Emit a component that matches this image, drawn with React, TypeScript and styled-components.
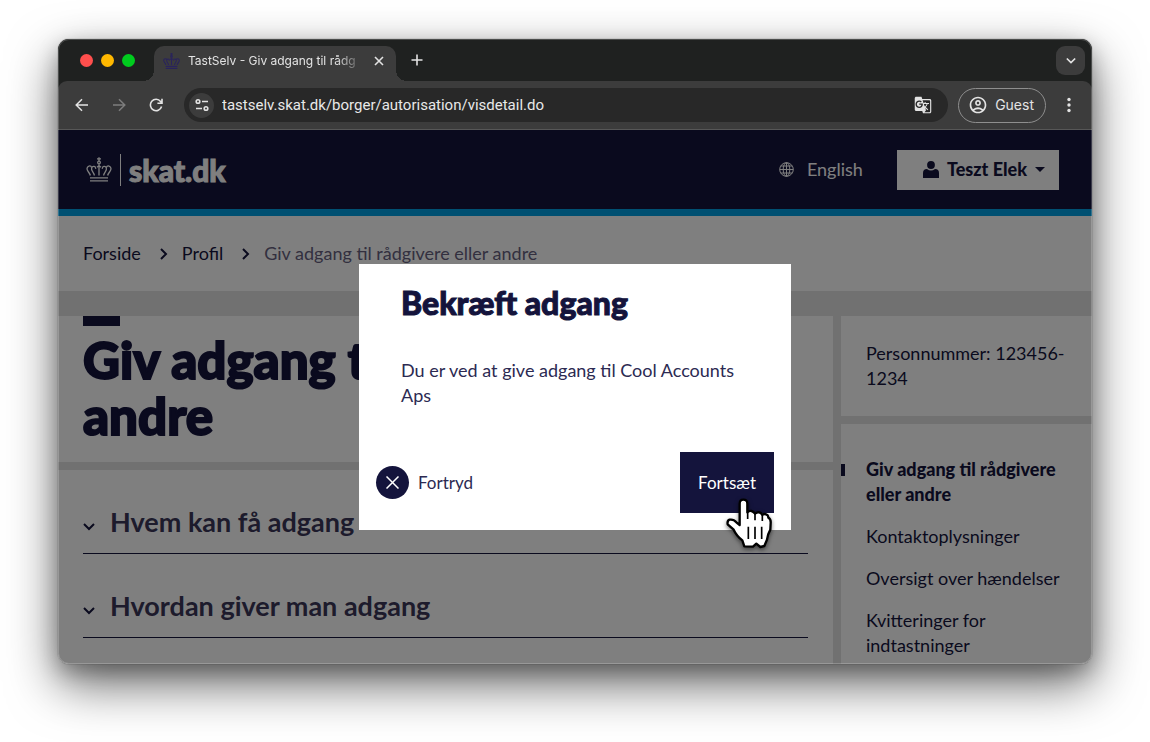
import React from "react";
import styled, { createGlobalStyle } from "styled-components";
import { MdGTranslate, MdOutlineAccountCircle } from "react-icons/md";

const navy = "#14143c";
const siteFont = `Lato, "Open Sans", sans-serif`;
const chromeFont = `Inter, Roboto, sans-serif`;

const Global = createGlobalStyle`
  *, *::before, *::after { box-sizing: border-box; }
  body { margin: 0; background: #fff; font-family: ${siteFont}; }
  h1, h2, p, ol, ul { margin: 0; padding: 0; }
  ol, ul { list-style: none; }
  a { color: inherit; text-decoration: none; }
  button { font: inherit; color: inherit; border: 0; background: none; padding: 0; cursor: pointer; }
  svg { display: block; flex: none; }
`;

const Desktop = styled.div`
  display: flex;
  min-height: 100vh;
  padding: 39px 58px 78px;
  overflow: hidden;
`;

const Window = styled.div`
  position: relative;
  flex: 1;
  min-width: 0;
  display: flex;
  flex-direction: column;
  border-radius: 11px;
  background: #1f2120;
  box-shadow: 0 0 1px rgba(0, 0, 0, 0.8), 0 20px 50px rgba(0, 0, 0, 0.6), 0 8px 20px rgba(0, 0, 0, 0.25);
  &::after {
    content: "";
    position: absolute;
    inset: 0;
    border: 1px solid rgba(255, 255, 255, 0.2);
    border-radius: 11px;
    pointer-events: none;
  }
`;

/* Browser chrome */

const TabStrip = styled.div`
  display: flex;
  align-items: flex-end;
  height: 42px;
  padding: 0 7px 0 22px;
  color: #e3e3e3;
  font-family: ${chromeFont};
`;

const Lights = styled.div`
  display: flex;
  gap: 8px;
  padding-bottom: 14px;
  margin-right: 19px;
`;

const Light = styled.span<{ $color: string }>`
  width: 13px;
  height: 13px;
  border-radius: 50%;
  background: ${(p) => p.$color};
`;

const Tab = styled.div`
  position: relative;
  display: flex;
  align-items: center;
  width: 242px;
  height: 35px;
  padding: 0 8px 6px 9px;
  border-radius: 10px 10px 0 0;
  background: #3c3c3c;
  &::before,
  &::after {
    content: "";
    position: absolute;
    bottom: 0;
    width: 11px;
    height: 11px;
  }
  &::before {
    right: 100%;
    background: radial-gradient(circle at 0 0, transparent 11px, #3c3c3c 11px);
  }
  &::after {
    left: 100%;
    background: radial-gradient(circle at 100% 0, transparent 11px, #3c3c3c 11px);
  }
`;

const Favicon = styled.span`
  color: #29235c;
`;

const TabTitle = styled.span`
  flex: 1;
  margin: 0 6px 0 8px;
  overflow: hidden;
  white-space: nowrap;
  font-size: 12px;
  line-height: 18px;
  mask-image: linear-gradient(to right, #000 84%, transparent);
`;

const ChromeButton = styled.button<{ $filled?: boolean; $dim?: boolean }>`
  display: grid;
  place-items: center;
  width: ${(p) => (p.$filled ? 29 : 18)}px;
  height: ${(p) => (p.$filled ? 29 : 18)}px;
  border-radius: 9px;
  background: ${(p) => (p.$filled ? "#3c3c3c" : "transparent")};
  color: ${(p) => (p.$dim ? "#7d7d7d" : "#e3e3e3")};
`;

const NewTab = styled.div`
  flex: 1;
  padding: 0 0 12px 12px;
`;

const TabSearch = styled.div`
  padding-bottom: 6px;
`;

const Toolbar = styled.div`
  display: flex;
  align-items: center;
  height: 49px;
  padding: 0 14px 0 15px;
  border-bottom: 1px solid #575757;
  border-radius: 9px 9px 0 0;
  background: #3c3c3c;
  color: #e3e3e3;
  font-family: ${chromeFont};
`;

const NavButtons = styled.div`
  display: flex;
  gap: 19px;
  margin-right: 19px;
`;

const AddressBar = styled.div`
  flex: 1;
  min-width: 0;
  display: flex;
  align-items: center;
  gap: 8px;
  height: 34px;
  padding: 0 16px 0 5px;
  border-radius: 17px;
  background: #282828;
`;

const SiteInfo = styled.button`
  display: grid;
  place-items: center;
  width: 25px;
  height: 25px;
  border-radius: 50%;
  background: #3c3c3c;
`;

const Address = styled.input`
  flex: 1;
  min-width: 0;
  padding: 0;
  border: 0;
  outline: 0;
  background: none;
  color: #e8e8e8;
  font-family: Roboto, Inter, sans-serif;
  font-size: 15px;
  line-height: 20px;
`;

const Guest = styled.button`
  display: flex;
  align-items: center;
  gap: 7px;
  height: 35px;
  margin: 0 14px 0 10px;
  padding: 0 11px 0 9px;
  border: 1px solid #8e8e8e;
  border-radius: 18px;
  font-size: 14px;
  line-height: 20px;
`;

/* Site */

const Page = styled.div`
  position: relative;
  flex: 1;
  display: flex;
  flex-direction: column;
  border-radius: 0 0 10px 10px;
  overflow: hidden;
  background: #e3e3e3;
  color: ${navy};
  font-size: 18px;
  line-height: 25px;
`;

const Header = styled.header`
  display: flex;
  align-items: center;
  height: 86px;
  padding: 0 33px 0 28px;
  border-bottom: 7px solid #00a0e4;
  background: ${navy};
  color: #fff;
`;

const Logo = styled.a`
  display: flex;
  align-items: center;
  gap: 8px;
  margin-right: auto;
  font-size: 30px;
  font-weight: 900;
  line-height: 32px;
  -webkit-text-stroke: 1px currentColor;
`;

const LogoRule = styled.span`
  width: 1px;
  height: 32px;
  background: #fff;
`;

const Language = styled.a`
  display: flex;
  align-items: center;
  gap: 13px;
  margin-right: 34px;
`;

const UserMenu = styled.button`
  display: flex;
  align-items: center;
  gap: 8px;
  height: 40px;
  padding: 0 14px 0 26px;
  background: #fff;
  color: ${navy};
  font-weight: 900;
`;

const Crumbs = styled.nav`
  padding: 25px;
  background: #fff;
  ol {
    display: flex;
    align-items: center;
  }
`;

const Crumb = styled.li<{ $current?: boolean }>`
  display: flex;
  align-items: center;
  color: ${(p) => (p.$current ? "#66617f" : navy)};
  svg {
    margin: 0 12px 0 17px;
  }
`;

const Columns = styled.div`
  flex: 1;
  display: grid;
  grid-template-columns: minmax(0, 1fr) 251px;
  gap: 8px;
  margin-top: 25px;
`;

const Column = styled.div`
  display: flex;
  flex-direction: column;
  gap: 8px;
`;

const Card = styled.section<{ $grow?: boolean }>`
  flex: ${(p) => (p.$grow ? "1 0 auto" : "none")};
  padding: 0 25px;
  background: #fff;
`;

const Title = styled.h1`
  padding-bottom: 18px;
  font-size: 51px;
  font-weight: 900;
  line-height: 56px;
  -webkit-text-stroke: 2px currentColor;
  &::before {
    content: "";
    display: block;
    width: 37px;
    height: 10px;
    margin-bottom: 6px;
    background: ${navy};
  }
`;

const Fold = styled.h2`
  height: 84px;
  border-bottom: 1px solid ${navy};
  button {
    display: flex;
    align-items: center;
    gap: 15px;
    width: 100%;
    height: 100%;
    padding-top: 21px;
    color: #3a3658;
    font-size: 27px;
    font-weight: 700;
    line-height: 32px;
    text-align: left;
  }
  svg {
    color: ${navy};
    margin-top: 8px;
  }
`;

const PersonNumber = styled.p`
  padding: 25px 0;
`;

const SideNav = styled.ul`
  display: flex;
  flex-direction: column;
  gap: 17px;
  padding: 33px 0 6px;
`;

const SideItem = styled.li<{ $active?: boolean }>`
  position: relative;
  font-weight: ${(p) => (p.$active ? 900 : 400)};
  &::before {
    content: "";
    display: ${(p) => (p.$active ? "block" : "none")};
    position: absolute;
    top: 7px;
    left: -25px;
    width: 4px;
    height: 12px;
    background: ${navy};
  }
`;

/* Dialog */

const Backdrop = styled.div`
  position: absolute;
  inset: 0;
  display: grid;
  place-items: center;
  background: rgba(0, 0, 0, 0.5);
`;

const Dialog = styled.div`
  width: 432px;
  padding: 22px 17px 17px;
  background: #fff;
`;

const DialogTitle = styled.h2`
  margin: 0 25px 38px;
  font-size: 32px;
  font-weight: 900;
  line-height: 34px;
  -webkit-text-stroke: 1px currentColor;
`;

const DialogText = styled.p`
  margin: 0 25px 44px;
  color: #2c2a52;
`;

const Actions = styled.div`
  display: flex;
  align-items: center;
  justify-content: space-between;
  font-size: 17px;
`;

const Cancel = styled.button`
  display: flex;
  align-items: center;
  gap: 9px;
  color: #2c2a52;
`;

const CancelMark = styled.span`
  display: grid;
  place-items: center;
  width: 33px;
  height: 33px;
  border-radius: 50%;
  background: ${navy};
  color: #fff;
`;

const Confirm = styled.button`
  position: relative;
  height: 61px;
  padding: 0 18px;
  background: ${navy};
  color: #fff;
`;

const Pointer = styled.svg`
  position: absolute;
  top: 45px;
  left: 45px;
  overflow: visible;
  filter: drop-shadow(0 2px 2px rgba(0, 0, 0, 0.5));
`;

const Crown = ({ width, height, stroke }: { width: number; height: number; stroke: number }) => (
  <svg width={width} height={height} viewBox="0 0 78 74" fill="none" stroke="currentColor" strokeWidth={stroke} aria-hidden="true">
    <path d="M12 62H66M12 71H66" />
    <path d="M39 0V12M33 5H45" />
    <circle cx="39" cy="16" r="4" />
    <path d="M39 21V55M33 30L39 25L45 30" />
    <path d="M13 55C11 46 3 42 3 35C3 26 14 23 17 31" />
    <path d="M65 55C67 46 75 42 75 35C75 26 64 23 61 31" />
    <path d="M25 55C25 46 14 42 17 32C20 25 30 27 29 35" />
    <path d="M53 55C53 46 64 42 61 32C58 25 48 27 49 35" />
  </svg>
);

const Chevron = ({ size, d, stroke }: { size: number; d: string; stroke: number }) => (
  <svg width={size} height={size} viewBox="0 0 12 12" fill="none" stroke="currentColor" strokeWidth={stroke} aria-hidden="true">
    <path d={d} />
  </svg>
);

const down = "M1 4L6 9L11 4";
const right = "M3 1L8 6L3 11";

export default function App() {
  return (
    <Desktop>
      <Global />
      <Window>
        <TabStrip>
          <Lights>
            <Light $color="#ff4f4d" />
            <Light $color="#ffb800" />
            <Light $color="#00cc1e" />
          </Lights>
          <Tab>
            <Favicon>
              <Crown width={17} height={16} stroke={5} />
            </Favicon>
            <TabTitle>TastSelv - Giv adgang til rådg</TabTitle>
            <ChromeButton aria-label="Close tab">
              <svg width="10" height="10" viewBox="0 0 10 10" stroke="currentColor" strokeWidth="1.6">
                <path d="M1 1L9 9M9 1L1 9" />
              </svg>
            </ChromeButton>
          </Tab>
          <NewTab>
            <ChromeButton aria-label="New tab">
              <svg width="12" height="12" viewBox="0 0 12 12" stroke="currentColor" strokeWidth="1.6">
                <path d="M6 0.5V11.5M0.5 6H11.5" />
              </svg>
            </ChromeButton>
          </NewTab>
          <TabSearch>
            <ChromeButton $filled aria-label="Search tabs">
              <Chevron size={10} d="M1 3L6 8L11 3" stroke={2} />
            </ChromeButton>
          </TabSearch>
        </TabStrip>

        <Toolbar>
          <NavButtons>
            <ChromeButton aria-label="Back">
              <svg width="14" height="14" viewBox="0 0 14 14" fill="none" stroke="currentColor" strokeWidth="1.5">
                <path d="M13 7H1.5M7 1.2L1.2 7L7 12.8" />
              </svg>
            </ChromeButton>
            <ChromeButton $dim aria-label="Forward">
              <svg width="14" height="14" viewBox="0 0 14 14" fill="none" stroke="currentColor" strokeWidth="1.5">
                <path d="M1 7H12.5M7 1.2L12.8 7L7 12.8" />
              </svg>
            </ChromeButton>
            <ChromeButton aria-label="Reload">
              <svg width="14" height="14" viewBox="0 0 14 14" fill="none" stroke="currentColor" strokeWidth="1.6">
                <path d="M12.6 8.6A5.7 5.7 0 1 1 11.6 3.4L13 5M13 0.8V5.2H8.4" />
              </svg>
            </ChromeButton>
          </NavButtons>
          <AddressBar>
            <SiteInfo aria-label="Site information">
              <svg width="14" height="14" viewBox="0 0 14 14" fill="none" stroke="currentColor" strokeWidth="1.6">
                <circle cx="3" cy="3.5" r="1.8" />
                <path d="M7 3.5H13M1 10.5H7" />
                <circle cx="11" cy="10.5" r="1.8" />
              </svg>
            </SiteInfo>
            <Address aria-label="Address" defaultValue="tastselv.skat.dk/borger/autorisation/visdetail.do" />
            <ChromeButton aria-label="Translate this page">
              <MdGTranslate size={18} />
            </ChromeButton>
          </AddressBar>
          <Guest>
            <MdOutlineAccountCircle size={20} />
            Guest
          </Guest>
          <ChromeButton aria-label="Menu">
            <svg width="4" height="16" viewBox="0 0 4 16" fill="currentColor">
              <circle cx="2" cy="2.5" r="1.7" />
              <circle cx="2" cy="8" r="1.7" />
              <circle cx="2" cy="13.5" r="1.7" />
            </svg>
          </ChromeButton>
        </Toolbar>

        <Page>
          <Header>
            <Logo href="#" aria-label="skat.dk">
              <Crown width={26} height={25} stroke={4} />
              <LogoRule />
              skat.dk
            </Logo>
            <Language href="#">
              <svg width="15" height="15" viewBox="0 0 15 15" fill="none" stroke="currentColor" aria-hidden="true">
                <circle cx="7.5" cy="7.5" r="6.8" />
                <ellipse cx="7.5" cy="7.5" rx="3.3" ry="6.8" />
                <path d="M7.5 0.7V14.3M0.7 7.5H14.3M1.8 4H13.2M1.8 11H13.2" />
              </svg>
              English
            </Language>
            <UserMenu>
              <svg width="16" height="17" viewBox="0 0 16 17" fill="currentColor" aria-hidden="true">
                <circle cx="8" cy="4" r="3.9" />
                <path d="M0 17V12Q0 8 4 8Q8 11 12 8Q16 8 16 12V17Z" />
              </svg>
              Teszt Elek
              <svg width="10" height="5" viewBox="0 0 10 5" fill="currentColor" aria-hidden="true">
                <path d="M0 0H10L5 5Z" />
              </svg>
            </UserMenu>
          </Header>

          <Crumbs aria-label="Breadcrumb">
            <ol>
              <Crumb>
                <a href="#">Forside</a>
                <Chevron size={12} d={right} stroke={2} />
              </Crumb>
              <Crumb>
                <a href="#">Profil</a>
                <Chevron size={12} d={right} stroke={2} />
              </Crumb>
              <Crumb $current aria-current="page">
                Giv adgang til rådgivere eller andre
              </Crumb>
            </ol>
          </Crumbs>

          <Columns>
            <Column>
              <Card>
                <Title>
                  Giv adgang til rådgivere eller <br />
                  andre
                </Title>
              </Card>
              <Card $grow>
                <Fold>
                  <button aria-expanded="false">
                    <Chevron size={12} d={down} stroke={2} />
                    Hvem kan få adgang
                  </button>
                </Fold>
                <Fold>
                  <button aria-expanded="false">
                    <Chevron size={12} d={down} stroke={2} />
                    Hvordan giver man adgang
                  </button>
                </Fold>
              </Card>
            </Column>
            <Column>
              <Card>
                <PersonNumber>Personnummer: 123456-1234</PersonNumber>
              </Card>
              <Card $grow>
                <SideNav>
                  <SideItem $active>
                    <a href="#">Giv adgang til rådgivere eller andre</a>
                  </SideItem>
                  <SideItem>
                    <a href="#">Kontaktoplysninger</a>
                  </SideItem>
                  <SideItem>
                    <a href="#">Oversigt over hændelser</a>
                  </SideItem>
                  <SideItem>
                    <a href="#">Kvitteringer for indtastninger</a>
                  </SideItem>
                </SideNav>
              </Card>
            </Column>
          </Columns>

          <Backdrop>
            <Dialog role="dialog" aria-modal="true" aria-labelledby="confirm-title">
              <DialogTitle id="confirm-title">Bekræft adgang</DialogTitle>
              <DialogText>Du er ved at give adgang til Cool Accounts Aps</DialogText>
              <Actions>
                <Cancel>
                  <CancelMark>
                    <svg width="13" height="13" viewBox="0 0 13 13" stroke="currentColor" strokeWidth="1.5" aria-hidden="true">
                      <path d="M0.5 0.5L12.5 12.5M12.5 0.5L0.5 12.5" />
                    </svg>
                  </CancelMark>
                  Fortryd
                </Cancel>
                <Confirm>
                  Fortsæt
                  <Pointer width="48" height="53" viewBox="0 0 144 159" aria-hidden="true">
                    <path
                      d="M44 84V20Q44 8 55 8Q67 8 67 20V46Q80 36 90 50Q102 40 112 53Q120 48 128 55Q130 58 130 62Q138 66 137 78L136 98Q128 112 126 128L118 147L106 150L94 140L84 149L58 148L52 130Q34 116 26 98L8 82Q6 70 14 68Q26 66 34 76Z"
                      fill="#fff"
                      stroke="#000"
                      strokeWidth="7"
                      strokeLinejoin="round"
                    />
                    <path d="M70 89V126M90 89V126M110 89V126M68 46V66M90 50V70M112 53V72" stroke="#000" strokeWidth="5" fill="none" />
                  </Pointer>
                </Confirm>
              </Actions>
            </Dialog>
          </Backdrop>
        </Page>
      </Window>
    </Desktop>
  );
}
